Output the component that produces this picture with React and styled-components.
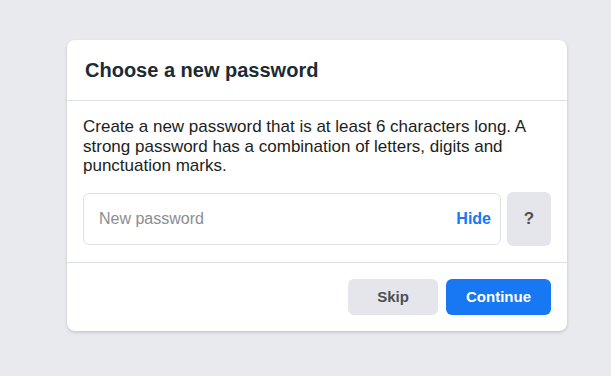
import React from "react";
import styled, { createGlobalStyle } from "styled-components";

const Global = createGlobalStyle`
  html, body { margin: 0; padding: 0; background: #e9eaee; }
  body { font-family: "Liberation Sans", Arial, sans-serif; }
  * { box-sizing: border-box; }
`;

const Page = styled.div`
  width: 611px;
  height: 376px;
  padding: 40px 0 0 67px;
`;

const Card = styled.div`
  width: 500px;
  background: #fff;
  border-radius: 8px;
  box-shadow: 0 1px 3px rgba(0, 0, 0, 0.12), 0 2px 4px rgba(0, 0, 0, 0.06);
`;

const Header = styled.div`
  height: 61px;
  padding: 0 16px 0 18px;
  display: flex;
  align-items: center;
  border-bottom: 1px solid #dddfe2;
`;

const Title = styled.h2`
  margin: 0;
  font-size: 20px;
  font-weight: 700;
  color: #1c2b33;
`;

const Body = styled.div`
  padding: 16px 16px 16px 16px;
  border-bottom: 1px solid #dddfe2;
`;

const Text = styled.p`
  margin: 0 0 16px 0;
  font-size: 17px;
  line-height: 19.5px;
  color: #1c1e21;
`;

const Row = styled.div`
  display: flex;
  align-items: center;
  gap: 6px;
`;

const Field = styled.div`
  flex: 1;
  height: 52px;
  border: 1px solid #dddfe2;
  border-radius: 6px;
  display: flex;
  align-items: center;
  padding: 0 9px 0 15px;
`;

const Input = styled.input`
  flex: 1;
  border: none;
  outline: none;
  padding: 0;
  font-family: inherit;
  font-size: 16px;
  color: #1c1e21;
  background: transparent;
  &::placeholder { color: #8a8d91; }
`;

const LinkButton = styled.button`
  border: none;
  background: none;
  padding: 0;
  font-family: inherit;
  font-size: 16px;
  font-weight: 700;
  color: #1877f2;
`;

const Button = styled.button`
  border: none;
  border-radius: 6px;
  padding: 0;
  font-family: inherit;
  font-weight: 700;
  font-size: ${(p) => p.$fs || 15}px;
  cursor: pointer;
  background: ${(p) => (p.$primary ? "#1877f2" : "#e4e6eb")};
  color: ${(p) => (p.$primary ? "#fff" : "#4b4f56")};
  width: ${(p) => p.$w}px;
  height: ${(p) => p.$h}px;
`;

const Footer = styled.div`
  padding: 16px;
  display: flex;
  justify-content: flex-end;
  gap: 8px;
`;

export default function App() {
  return (
    <>
      <Global />
      <Page>
        <Card>
          <Header>
            <Title>Choose a new password</Title>
          </Header>
          <Body>
            <Text>
              Create a new password that is at least 6 characters long. A
              strong password has a combination of letters, digits and
              punctuation marks.
            </Text>
            <Row>
              <Field>
                <Input type="text" placeholder="New password" />
                <LinkButton>Hide</LinkButton>
              </Field>
              <Button $w={44} $h={54} $fs={17}>?</Button>
            </Row>
          </Body>
          <Footer>
            <Button $w={90} $h={36}>Skip</Button>
            <Button $primary $w={105} $h={36}>Continue</Button>
          </Footer>
        </Card>
      </Page>
    </>
  );
}
